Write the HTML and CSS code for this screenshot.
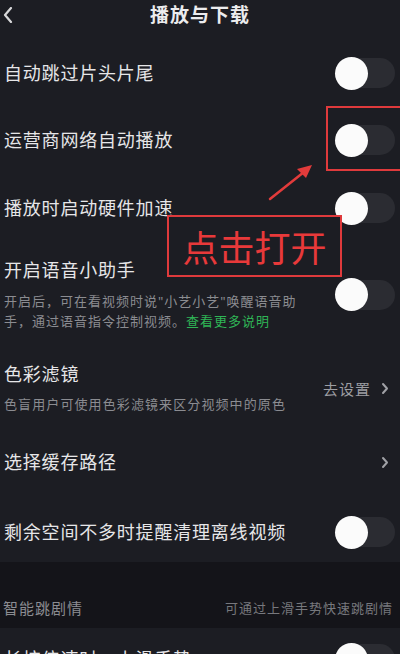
FILE: index.html
```html
<!DOCTYPE html>
<html lang="zh-CN">
<head>
  <meta charset="UTF-8" />
  <title>播放与下载</title>
  <link rel="stylesheet" href="styles.css">
</head>
<body>
  <div class="pagina">
    <div class="cabecera">
      <svg class="atras" width="10" height="16" viewBox="0 0 10 16"><polyline points="8,1 2,8 8,15" fill="none" stroke="#d8d8da" stroke-width="2.2" stroke-linecap="round" stroke-linejoin="round"/></svg>
      <h2>播放与下载</h2>
    </div>

    <div class="fila f1">
      <div class="texto"><div class="titulo">自动跳过片头片尾</div></div>
      <div class="switch"><span class="bola"></span></div>
    </div>
    <div class="fila f2">
      <div class="texto"><div class="titulo">运营商网络自动播放</div></div>
      <div class="switch"><span class="bola"></span></div>
    </div>
    <div class="fila f3">
      <div class="texto"><div class="titulo">播放时启动硬件加速</div></div>
      <div class="switch"><span class="bola"></span></div>
    </div>
    <div class="fila f4">
      <div class="texto">
        <div class="titulo">开启语音小助手</div>
        <div class="desc"><span>开启后，可在看视频时说"小艺小艺"唤醒语音助手，通过语音指令控制视频。</span><span class="verde">查看更多说明</span></div>
      </div>
      <div class="switch"><span class="bola"></span></div>
    </div>
    <div class="fila f5">
      <div class="texto">
        <div class="titulo">色彩滤镜</div>
        <div class="desc">色盲用户可使用色彩滤镜来区分视频中的原色</div>
      </div>
      <div class="ir">去设置
        <svg width="8" height="13" viewBox="0 0 8 13"><polyline points="2,2 6,6.5 2,11" fill="none" stroke="#a0a1a6" stroke-width="2" stroke-linecap="round" stroke-linejoin="round"/></svg>
      </div>
    </div>
    <div class="fila f6">
      <div class="texto"><div class="titulo">选择缓存路径</div></div>
      <div class="ir">
        <svg width="8" height="13" viewBox="0 0 8 13"><polyline points="2,2 6,6.5 2,11" fill="none" stroke="#a0a1a6" stroke-width="2" stroke-linecap="round" stroke-linejoin="round"/></svg>
      </div>
    </div>
    <div class="fila f7">
      <div class="texto"><div class="titulo">剩余空间不多时提醒清理离线视频</div></div>
      <div class="switch"><span class="bola"></span></div>
    </div>

    <div class="grupo">
      <span>智能跳剧情</span>
      <span class="nota">可通过上滑手势快速跳剧情</span>
    </div>
    <div class="fila f8">
      <div class="texto"><div class="titulo">长按倍速时，上滑手势</div></div>
      <div class="switch"><span class="bola"></span></div>
    </div>

    <!-- marcas rojas encima de la captura -->
    <div class="marco-switch"></div>
    <svg class="flecha" width="60" height="50" viewBox="0 0 60 50">
      <line x1="6" y1="40" x2="40" y2="13" stroke="#e23b3b" stroke-width="2.5" stroke-linecap="round"/>
      <polygon points="48,6 33,10 42,19" fill="#e23b3b"/>
    </svg>
    <div class="etiqueta">点击打开</div>
  </div>
</body>
</html>
```

FILE: styles.css
```css
body {
  margin: 0;
  background: #1c1d23;
  font-family: "Noto Sans", "Noto Sans CJK SC", sans-serif;
  color: #e4e4e6;
}
.pagina {
  position: relative;
  width: 400px;
  height: 654px;
  overflow: hidden;
  background: #1c1d23;
}
.cabecera {
  height: 40px;
  display: flex;
  justify-content: center;
  align-items: flex-start;
  position: relative;
}
.cabecera h2 {
  margin: 0;
  font-size: 19px;
  line-height: 30px;
  font-weight: bold;
  letter-spacing: 1px;
  color: #ececee;
}
.atras {
  position: absolute;
  left: 3px;
  top: 7px;
}
.fila {
  display: flex;
  align-items: center;
  justify-content: space-between;
  padding: 0 5px 0 4px;
  box-sizing: border-box;
}
.f1 { height: 66px; }
.f2 { height: 68px; }
.f3 { height: 68px; }
.f4 { padding-top: 16px; padding-bottom: 14px; }
.f5 { padding-top: 17px; padding-bottom: 16px; }
.f6 { height: 64px; }
.f7 { height: 68px; padding-top: 8px; }
.f8 { height: 62px; }
.titulo {
  font-size: 18px;
  line-height: 24px;
  letter-spacing: 0.8px;
  color: #e6e6e8;
}
.desc {
  width: 300px;
  margin-top: 9px;
  font-size: 13px;
  line-height: 20px;
  letter-spacing: 1px;
  color: #8b8c91;
}
.f5 .desc {
  width: auto;
  margin-top: 8px;
  letter-spacing: 1.1px;
}
.verde {
  color: #2fb556;
}
.switch {
  flex: none;
  width: 60px;
  height: 30px;
  border-radius: 15px;
  background: #2b2c32;
  display: flex;
  align-items: center;
}
.bola {
  flex: none;
  width: 33px;
  height: 33px;
  border-radius: 50%;
  background: #fbfbfb;
}
.ir {
  display: flex;
  align-items: center;
  gap: 10px;
  padding-right: 6px;
  font-size: 15px;
  letter-spacing: 1px;
  color: #9c9da2;
}
.grupo {
  height: 66px;
  background: #141419;
  display: flex;
  align-items: flex-end;
  justify-content: space-between;
  padding: 0 7px 10px 3px;
  box-sizing: border-box;
  font-size: 15px;
  line-height: 20px;
  letter-spacing: 1px;
  color: #8c8d92;
}
.grupo .nota {
  font-size: 13px;
  color: #77787d;
}
.marco-switch {
  position: absolute;
  left: 326px;
  top: 106px;
  width: 80px;
  height: 61px;
  border: 2px solid #df3a3c;
}
.flecha {
  position: absolute;
  left: 264px;
  top: 159px;
}
.etiqueta {
  position: absolute;
  left: 167px;
  top: 215px;
  width: 171px;
  height: 58px;
  border: 2px solid #df3a3c;
  background: #1c1d23;
  display: flex;
  align-items: center;
  justify-content: center;
  font-size: 36px;
  color: #e8393a;
  letter-spacing: 0;
}
```
